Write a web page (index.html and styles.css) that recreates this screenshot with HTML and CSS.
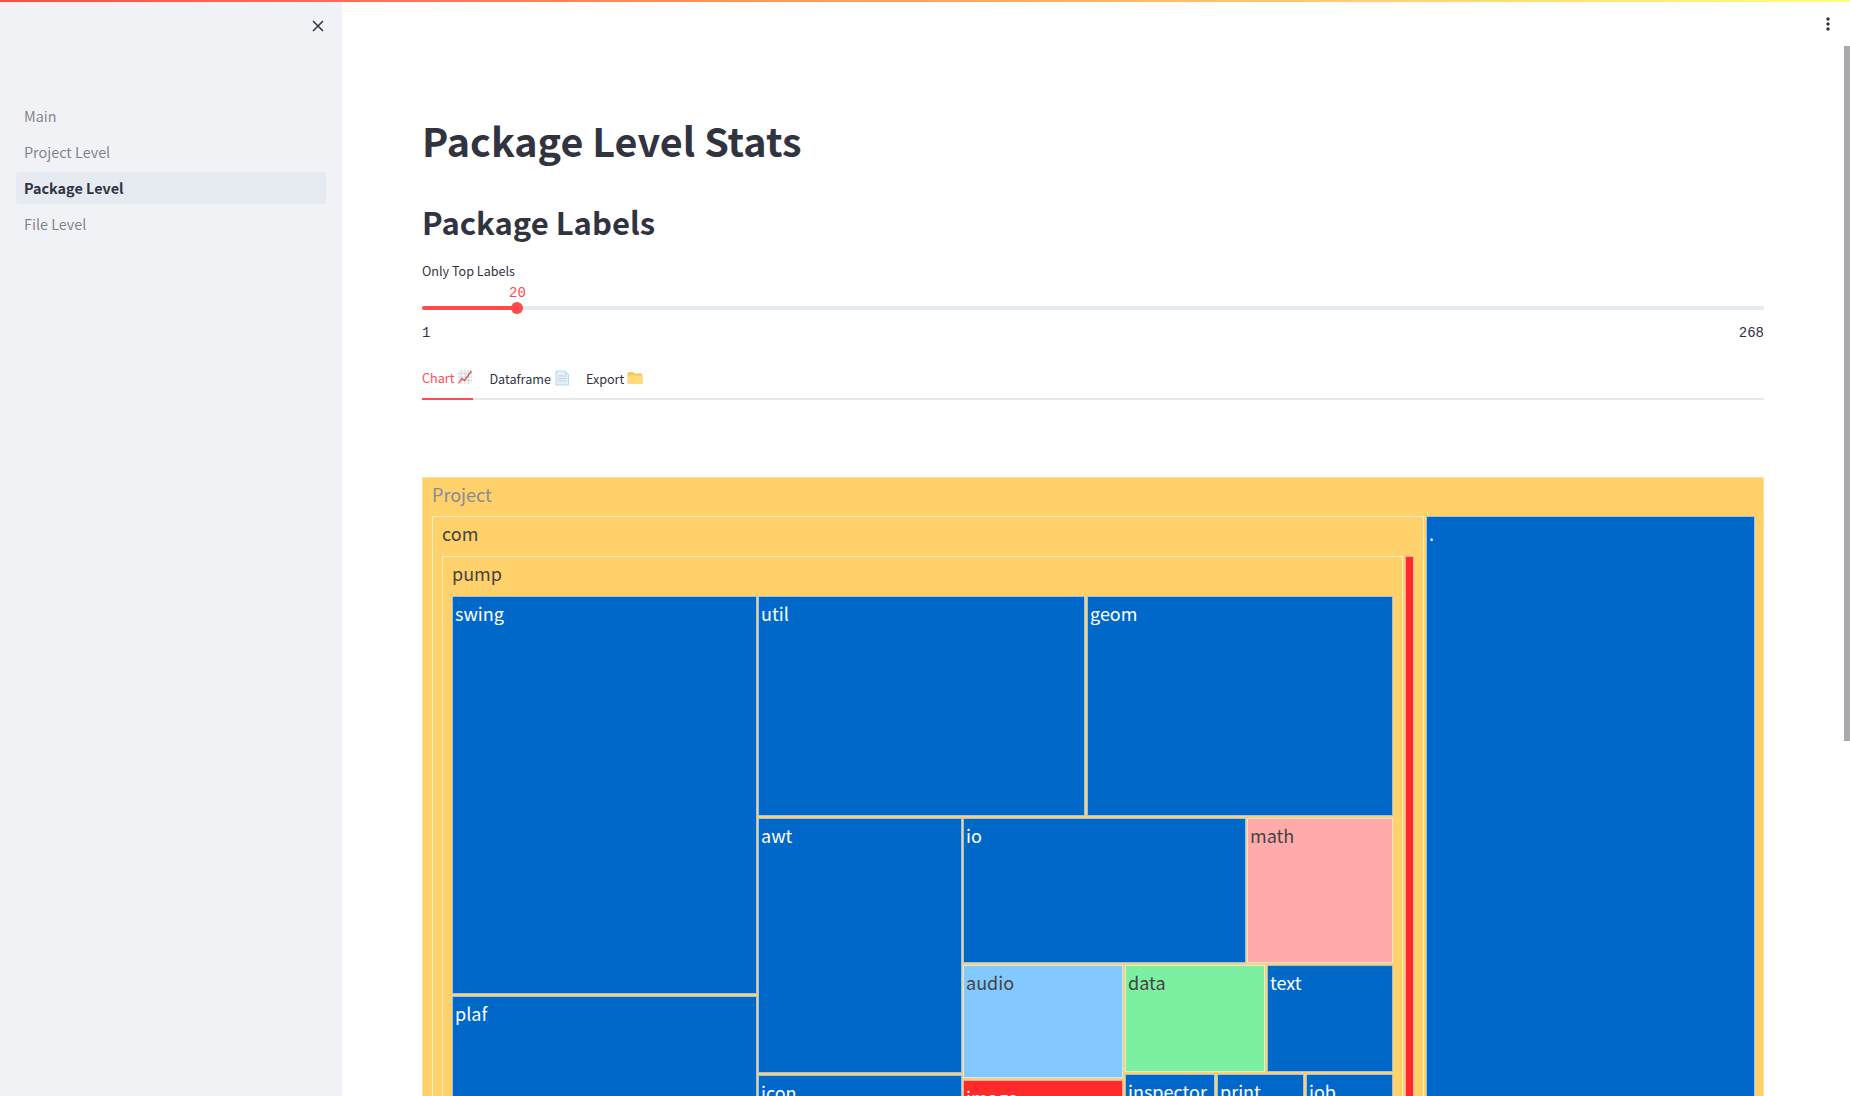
FILE: index.html
```html
<!DOCTYPE html>
<html lang="en">
<head>
<meta charset="utf-8">
<title>Package Level Stats</title>
<link rel="stylesheet" href="styles.css">
</head>
<body>
<div class="decoration"></div>
<div class="app">
  <aside class="sidebar">
    <div class="sidebar-head">
      <svg class="close-icon" viewBox="0 0 14 14" aria-hidden="true"><path d="M2 2 12 12M12 2 2 12"/></svg>
    </div>
    <nav class="nav">
      <a class="nav-item">Main</a>
      <a class="nav-item">Project Level</a>
      <a class="nav-item active">Package Level</a>
      <a class="nav-item">File Level</a>
    </nav>
  </aside>
  <main class="main">
    <svg class="menu-icon" viewBox="0 0 6 16" aria-hidden="true"><circle cx="3" cy="3" r="1.7"/><circle cx="3" cy="8" r="1.7"/><circle cx="3" cy="13" r="1.7"/></svg>
    <div class="scroll-thumb"></div>
    <h1 class="title">Package Level Stats</h1>
    <h2 class="subtitle">Package Labels</h2>
    <div class="slider">
      <div class="slider-label">Only Top Labels</div>
      <div class="slider-value"><span>20</span></div>
      <div class="track"><div class="track-fill"></div><div class="thumb"></div></div>
      <div class="slider-range"><span>1</span><span>268</span></div>
    </div>
    <div class="tabs">
      <div class="tab active">Chart
        <svg class="emoji" viewBox="0 0 16 16" aria-hidden="true">
          <rect x="1" y="1" width="14" height="14" fill="#f4f6f8"/>
          <path d="M1 4.500H15M1 8H15M1 11.500H15M4.500 1V15M8 1V15M11.500 1V15" stroke="#c9d3da" stroke-width=".7" fill="none"/>
          <path d="M1.500 14.500 5 9.500 7.500 11.500 14.500 2" stroke="#d9534f" stroke-width="1.300" fill="none"/>
        </svg>
      </div>
      <div class="tab">Dataframe
        <svg class="emoji" viewBox="0 0 16 16" aria-hidden="true">
          <path d="M2 1H11L14.500 4.500V15H2Z" fill="#e3f1fb" stroke="#a9d3ee" stroke-width=".8"/>
          <path d="M11 1V4.500H14.500Z" fill="#b9dcf3"/>
          <path d="M4 6H12.500M4 8.500H12.500M4 11H12.500" stroke="#c3ccd3" stroke-width=".9"/>
        </svg>
      </div>
      <div class="tab">Export
        <svg class="emoji" viewBox="0 0 16 16" aria-hidden="true">
          <path d="M.500 3.500Q.500 2 2 2H6L7.500 3.500H14Q15.500 3.500 15.500 5V13.500H.500Z" fill="#f6c65b"/>
          <path d="M1 5.500H15.500L15 14H.500Z" fill="#ffdc78"/>
        </svg>
      </div>
    </div>
    <div class="treemap">
      <div class="node parent n-root"><span class="lbl muted">Project</span></div>
      <div class="node parent n-com"><span class="lbl dark">com</span></div>
      <div class="node blue n-dot"><span class="lbl">.</span></div>
      <div class="node parent n-pump"><span class="lbl dark">pump</span></div>
      <div class="node red n-red"></div>
      <div class="node blue n-swing"><span class="lbl">swing</span></div>
      <div class="node blue n-plaf"><span class="lbl">plaf</span></div>
      <div class="node blue n-util"><span class="lbl">util</span></div>
      <div class="node blue n-geom"><span class="lbl">geom</span></div>
      <div class="node blue n-awt"><span class="lbl">awt</span></div>
      <div class="node blue n-icon"><span class="lbl">icon</span></div>
      <div class="node blue n-io"><span class="lbl">io</span></div>
      <div class="node pink n-math"><span class="lbl dark">math</span></div>
      <div class="node sky n-audio"><span class="lbl dark">audio</span></div>
      <div class="node red n-image"><span class="lbl">image</span></div>
      <div class="node green n-data"><span class="lbl dark">data</span></div>
      <div class="node blue n-text"><span class="lbl">text</span></div>
      <div class="node blue n-inspector"><span class="lbl">inspector</span></div>
      <div class="node blue n-print"><span class="lbl">print</span></div>
      <div class="node blue n-job"><span class="lbl">job</span></div>
    </div>
  </main>
</div>
</body>
</html>
```
FILE: styles.css
```css
* { box-sizing: border-box; }
html, body { margin: 0; height: 100%; overflow: hidden; }
body {
  font-family: "Noto Sans CJK SC", "Noto Sans", sans-serif;
  color: #31333f;
  background: #fff;
}
.decoration {
  position: absolute;
  inset: 0 0 auto 0;
  height: 2px;
  background: linear-gradient(90deg, #ff4b4b, #fffd80);
  z-index: 5;
}
.app { display: flex; height: 1096px; }

.sidebar { flex: 0 0 342px; background: #f0f2f6; padding: 0 16px; }
.sidebar-head { display: flex; justify-content: flex-end; height: 100px; padding: 19px 1px 0 0; }
.close-icon { width: 14px; height: 14px; fill: none; stroke: #31333f; stroke-width: 1.500; }
.nav { display: flex; flex-direction: column; gap: 4px; }
.nav-item {
  height: 32px;
  line-height: 32px;
  padding: 0 8px;
  font-size: 14.4px;
  color: rgba(49, 51, 63, .6);
  border-radius: 4px;
}
.nav-item.active { background: #e6eaf1; color: #31333f; font-weight: 700; }

.main { position: relative; flex: 1; min-width: 0; padding: 0 86px 0 80px; overflow: hidden; }
.menu-icon { position: absolute; right: 19px; top: 16px; width: 6px; height: 16px; fill: #31333f; }
.scroll-thumb { position: absolute; right: 0; top: 46px; width: 6px; height: 695px; background: #aaa9ae; }

.title { margin: 112px 0 0; font-size: 39.500px; line-height: 56px; font-weight: 700; }
.subtitle { margin: 32px 0 0; font-size: 31px; line-height: 44px; font-weight: 700; }

.slider { margin-top: 17px; }
.slider-label { font-size: 12.600px; line-height: 20px; }
.slider-value { height: 20px; margin-top: 2px; padding-left: 87px; font-family: "Liberation Mono", monospace; font-size: 14px; line-height: 20px; color: #ff4b4b; }
.track { position: relative; height: 4px; border-radius: 2px; background: #e6eaf1; margin-top: 3px; }
.track-fill { width: 95px; height: 100%; border-radius: 2px; background: #ff4b4b; }
.thumb { position: absolute; left: 89px; top: -4px; width: 12px; height: 12px; border-radius: 50%; background: #ff4b4b; }
.slider-range { display: flex; justify-content: space-between; margin-top: 13px; font-family: "Liberation Mono", monospace; font-size: 14px; line-height: 20px; }

.tabs { display: flex; gap: 16px; margin-top: 15px; height: 42px; border-bottom: 2px solid #e9e9ec; }
.tab { display: flex; align-items: center; gap: 3px; height: 42px; padding-bottom: 2px; font-size: 12.600px; white-space: nowrap; }
.tab.active { color: #ff4b4b; border-bottom: 2px solid #ff4b4b; }
.emoji { width: 16px; height: 16px; flex: none; }

.treemap { position: relative; margin-top: 77px; height: 620px; font-size: 18px; }
.node { position: absolute; border: 1px solid rgba(255, 255, 255, .6); color: #fff; overflow: hidden; }
.parent { background: #ffd16a; }
.n-root { border-color: rgba(255, 255, 255, .3); }
.blue { background: #0068c9; }
.red { background: #ff2b2b; }
.pink { background: #ffabab; }
.sky { background: #83c9ff; }
.green { background: #7defa1; }
.lbl { position: absolute; left: 2px; top: 2px; line-height: 28px; white-space: nowrap; }
.dark { color: #444; }
.muted { color: #8a8b96; }
.parent .lbl { left: 9px; }

.n-root { left: 0; top: 0; width: 1342px; height: 620px; }
.n-com { left: 10px; top: 39px; width: 992px; height: 581px; }
.n-dot { left: 1004px; top: 39px; width: 329px; height: 581px; }
.n-pump { left: 20px; top: 79px; width: 961px; height: 541px; }
.n-red { left: 983px; top: 79px; width: 9px; height: 541px; }
.n-swing { left: 30px; top: 119px; width: 305px; height: 398px; }
.n-plaf { left: 30px; top: 519px; width: 305px; height: 101px; }
.n-util { left: 336px; top: 119px; width: 327px; height: 220px; }
.n-geom { left: 665px; top: 119px; width: 306px; height: 220px; }
.n-awt { left: 336px; top: 341px; width: 204px; height: 255px; }
.n-icon { left: 336px; top: 598px; width: 204px; height: 22px; }
.n-io { left: 541px; top: 341px; width: 283px; height: 145px; }
.n-math { left: 825px; top: 341px; width: 146px; height: 145px; }
.n-audio { left: 541px; top: 488px; width: 160px; height: 113px; }
.n-image { left: 541px; top: 603px; width: 160px; height: 17px; }
.n-data { left: 703px; top: 488px; width: 140px; height: 107px; }
.n-text { left: 845px; top: 488px; width: 126px; height: 107px; }
.n-inspector { left: 703px; top: 597px; width: 90px; height: 23px; }
.n-print { left: 795px; top: 597px; width: 87px; height: 23px; }
.n-job { left: 884px; top: 597px; width: 87px; height: 23px; }
```
